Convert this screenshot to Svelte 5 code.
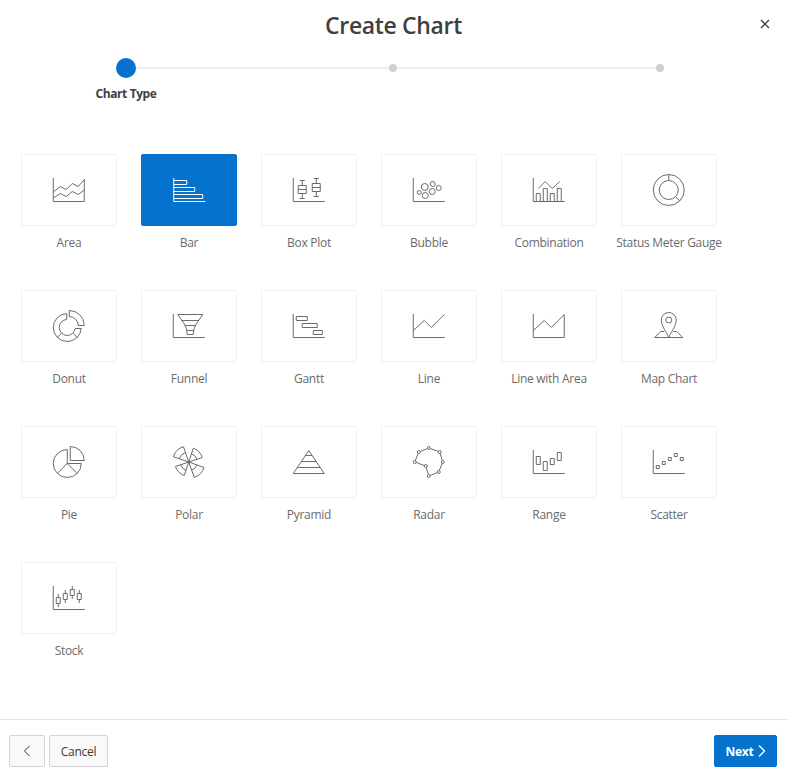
<script>
  const axis = 'M.5 4v23.5H32';
  const charts = [
    { name: 'Area', d: 'M.5 4v23.5h31v-22M.5 18l7-5.5 6 3 6-6 6 3 6-7M.5 24l7-4.5 6 3 6-5 6 3 6-4.5' },
    { name: 'Bar', d: 'M1 4v23.5h31.5M1 6.5h13v4H1M1 13.5h21v4H1M1 20.5h29v4H1' },
    { name: 'Box Plot', d: axis + 'M7 6.5h5M9.5 6.5v5M5.5 11.5h8v8h-8zM5.5 15.5h8M9.5 19.5v5M7 24.5h5M21 4.5h5M23.5 4.5v5M19.5 9.5h8v8h-8zM19.5 13.5h8M23.5 17.5v5M21 22.5h5' },
    { name: 'Bubble', d: axis, circles: [[6.5, 18.5, 2], [12, 13, 3.5], [20, 10, 2.5], [26, 14, 2.5], [19.5, 17.5, 3], [12.5, 21.5, 3]] },
    { name: 'Combination', d: axis + 'M3.5 27.5v-8h4v8M10.5 27.5v-13h4v13M17.5 27.5v-8h4v8M24.5 27.5v-13h4v13M5.5 14.5l7-7 7 7 7.5-7' },
    { name: 'Status Meter Gauge', d: 'M16 .5v6M22.8 22.8l4.2 4.2', circles: [[16, 16, 15.5], [16, 16, 9.5]] },
    { name: 'Donut', d: 'M14 3.5a14 14 0 1 0 14.5 15h-6.1a8 8 0 1 1-8.4-9zM16.5.5a15 15 0 0 1 15 15h-6a9 9 0 0 0-9-9zM4.5 27.5l4.2-4.2M24.5 27.5l-4.2-4.2' },
    { name: 'Funnel', d: axis + 'M5 4.5h25l-6.5 9.5q-3 4.5-3 10.5h-6q0-6-3-10.5zM9 10.5h17M12.5 15.5h10M14 20.5h7' },
    { name: 'Gantt', d: axis + 'M3.5 6.5h11v4h-11zM9.5 13.5h15v4h-15zM20.5 20.5h9v4h-9z' },
    { name: 'Line', d: axis + 'M.5 20.5l11-10 7 7L31.8 4.3' },
    { name: 'Line with Area', d: 'M.5 4v23.5h31v-23l-13 13-7-7-11 10' },
    { name: 'Map Chart', d: 'M16 27.3C14 22.5 8.5 16 8.5 10a7.5 7.5 0 0 1 15 0c0 6-5.5 12.5-7.5 17.3zM11.5 21.5H8l-6 6h28l-6-6h-3.5', circles: [[16, 10, 3]] },
    { name: 'Pie', d: 'M14.5 17.5V3.5a14 14 0 1 0 14 14zl-9.8 9.8M14.5 17.5l9.8 9.8M17.5.5a14 14 0 0 1 14 14h-14z' },
    { name: 'Polar', d: 'M16 16L10.7.6A16 16 0 0 0 .6 10.7zL20.5 2.3A14 14 0 0 1 29.5 11.5zL31.4 21.5A16 16 0 0 1 21.5 31.4zL11.5 29.5A14 14 0 0 1 2.7 20.5zM12.7 6.5A10 10 0 0 0 6.5 12.7M18.7 7.8A8.6 8.6 0 0 1 24.2 13.3M24.2 18.7A8.6 8.6 0 0 1 18.7 24.2M13.3 24.2A8.6 8.6 0 0 1 7.8 18.7', circles: [[16, 16, 1]] },
    { name: 'Pyramid', d: 'M16 4.5l15.5 23H.5zM12.6 9.5h6.8M8.6 15.5h14.8M4.5 21.5h23' },
    { name: 'Radar', d: 'M7.4 5.5l7.2-2.9M17.4 2.5l8.2 3M27.4 7.4l2.2 7.1M29.5 17.4l-3 7.2M24.6 26.6l-7.2 2.9M15.6 28.5l-2.2-7M11.6 19.6l-8.2-3.2M2.5 14.6l3-7.2', circles: [[6, 6, 1.5], [16, 2, 1.5], [27, 6, 1.5], [30, 16, 1.5], [26, 26, 1.5], [16, 30, 1.5], [13, 20, 1.5], [2, 16, 1.5]] },
    { name: 'Range', d: axis + 'M3.5 10.5h4v8h-4zM10.5 15.5h4v9h-4zM17.5 12.5h4v6h-4zM24.5 6.5h4v8h-4z' },
    { name: 'Scatter', d: axis + 'M3.5 19.5h3v3h-3zM9.5 15.5h3v3h-3zM15.5 11.5h3v3h-3zM21.5 7.5h3v3h-3zM27.5 11.5h3v3h-3z' },
    { name: 'Stock', d: axis + 'M3.5 15.5h4v6h-4zM5.5 12v3.5M5.5 21.5v3.5M10.5 11.5h4v6h-4zM12.5 8v3.5M12.5 17.5v3.5M17.5 7.5h4v6h-4zM19.5 4v3.5M19.5 13.5v3.5M24.5 11.5h4v6h-4zM26.5 8v3.5M26.5 17.5v3.5' }
  ];
  let selected = $state('Bar');
</script>

<div class="dialog">
  <header>
    <h1>Create Chart</h1>
    <button class="close" aria-label="Close">
      <svg width="10" height="10" viewBox="0 0 10 10"><path d="M1 1l8 8M9 1L1 9" /></svg>
    </button>
  </header>

  <div class="steps">
    <span class="dot current"></span>
    <span class="track"></span>
    <span class="dot"></span>
    <span class="track second"></span>
    <span class="dot"></span>
  </div>
  <div class="step-label"><span>Chart Type</span></div>

  <main>
    {#each charts as chart}
      <button class="chart" class:selected={selected === chart.name} onclick={() => (selected = chart.name)}>
        <span class="tile">
          <svg width="32" height="32" viewBox="0.25 0 32 32">
            <path d={chart.d} />
            {#each chart.circles ?? [] as [cx, cy, r]}
              <circle {cx} {cy} {r} />
            {/each}
          </svg>
        </span>
        <span class="name">{chart.name}</span>
      </button>
    {/each}
  </main>

  <footer>
    <button class="btn back" aria-label="Back">
      <svg width="8" height="12" viewBox="0 0 8 12"><path d="M6.5.8L1.5 6l5 5.2" /></svg>
    </button>
    <button class="btn cancel"><span>Cancel</span></button>
    <button class="btn next">
      <span>Next</span>
      <svg width="8" height="12" viewBox="0 0 8 12"><path d="M1 .5L6.5 6 1 11.5" /></svg>
    </button>
  </footer>
</div>

<style>
  :global(body) {
    margin: 0;
    background: #fff;
  }
  .dialog {
    display: flex;
    flex-direction: column;
    box-sizing: border-box;
    height: 777px;
    font-family: 'Open Sans', 'Noto Sans', sans-serif;
    font-size: 12px;
    line-height: 16px;
    color: #404040;
    background: #fff;
  }
  button {
    margin: 0;
    padding: 0;
    border: 0;
    background: none;
    font: inherit;
    color: inherit;
  }
  svg {
    display: block;
    flex: none;
    overflow: visible;
    fill: none;
    stroke: currentColor;
  }
  header {
    position: relative;
    height: 52px;
    text-align: center;
  }
  h1 {
    margin: 0;
    padding-top: 9px;
    font-size: 23px;
    font-weight: 600;
    line-height: 32px;
    letter-spacing: -0.35px;
  }
  .close {
    position: absolute;
    top: 19px;
    right: 17px;
  }
  .close svg {
    stroke-width: 1.3;
  }
  .steps {
    display: flex;
    align-items: center;
    height: 32px;
    padding: 0 123px 0 116px;
  }
  .track {
    width: 253px;
    height: 2px;
    background: #efefef;
  }
  .second {
    width: 259px;
  }
  .dot {
    width: 8px;
    height: 8px;
    border-radius: 50%;
    background: #d0d0d0;
  }
  .current {
    width: 20px;
    height: 20px;
    background: #0572ce;
  }
  .step-label {
    width: 252px;
    height: 70px;
    padding-top: 2px;
    box-sizing: border-box;
    text-align: center;
    font-weight: 700;
    letter-spacing: -0.4px;
  }
  main {
    display: grid;
    grid-template-columns: repeat(6, 120px);
    grid-auto-rows: 136px;
    flex: 1;
    align-content: start;
    padding-left: 9px;
  }
  .chart {
    display: flex;
    flex-direction: column;
    align-items: center;
    color: #6b6b6b;
  }
  .tile {
    display: flex;
    align-items: center;
    justify-content: center;
    box-sizing: border-box;
    width: 96px;
    height: 72px;
    margin-bottom: 9px;
    border: 1px solid #f0f0f0;
    border-radius: 2px;
  }
  .selected .tile {
    border-color: #0572ce;
    background: #0572ce;
    color: #fff;
  }
  .name {
    white-space: nowrap;
    letter-spacing: -0.28px;
  }
  .selected .name {
    color: #6b6b6b;
  }
  footer {
    display: flex;
    gap: 4px;
    box-sizing: border-box;
    height: 58px;
    padding: 15px 10px 0 9px;
    border-top: 1px solid #e2e2e2;
  }
  .btn {
    display: flex;
    align-items: center;
    justify-content: center;
    box-sizing: border-box;
    height: 32px;
    border: 1px solid #d4d4d4;
    border-radius: 2px;
    background: #f9f9f9;
    color: #383838;
  }
  .btn span {
    padding-top: 2px;
    letter-spacing: -0.25px;
  }
  .back {
    width: 36px;
  }
  .cancel {
    width: 59px;
  }
  .next {
    width: 63px;
    gap: 4px;
    margin-left: auto;
    border-color: #0572ce;
    background: #0572ce;
    color: #fff;
    font-weight: 700;
  }
  .next svg {
    stroke-width: 1.4;
  }
</style>
